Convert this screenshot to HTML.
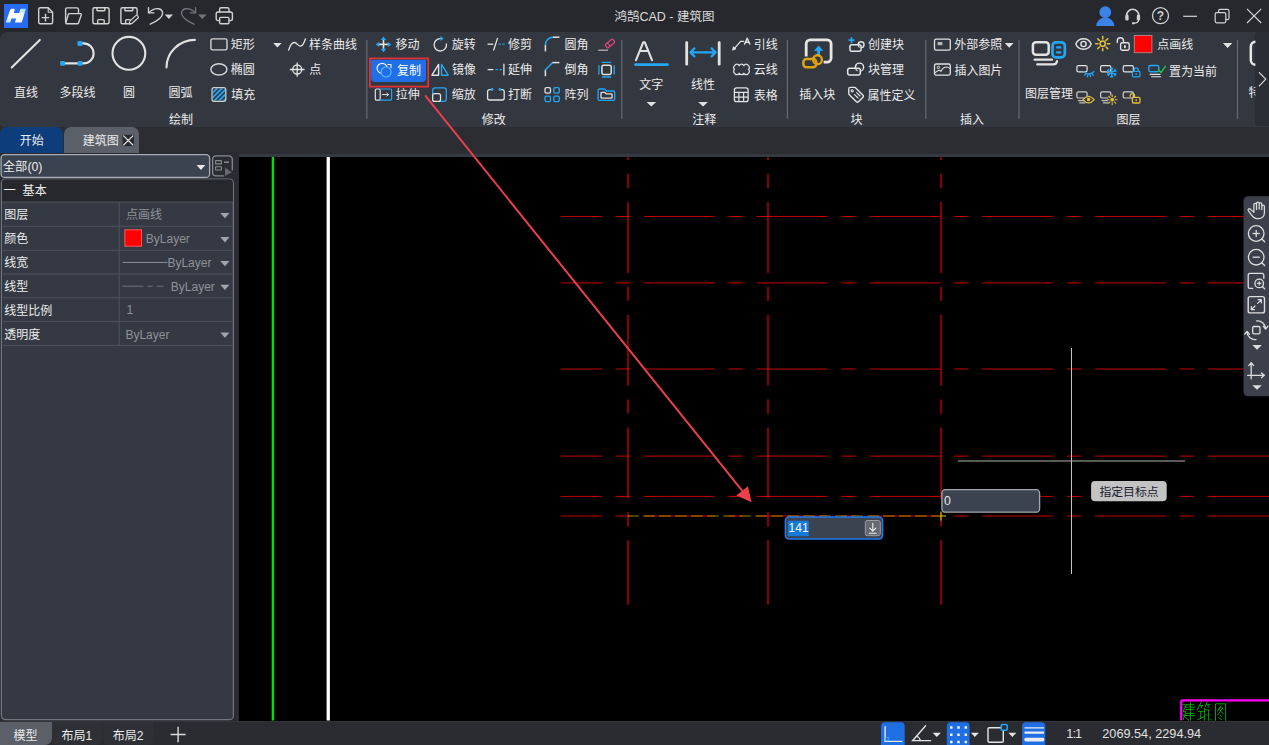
<!DOCTYPE html>
<html lang="zh-CN"><head><meta charset="utf-8"><title>鸿鹄CAD - 建筑图</title>
<style>
html,body{margin:0;padding:0;background:#000;}
body{width:1269px;height:745px;position:relative;overflow:hidden;font-family:"Liberation Sans","Noto Sans CJK SC",sans-serif;}
#bg div{position:absolute;box-sizing:border-box;}
#gfx{position:absolute;left:0;top:0;width:1269px;height:745px;overflow:hidden;}
#gfx text{font-family:"Liberation Sans","Noto Sans CJK SC",sans-serif;font-size:12px;fill:#ebebeb;}
#txt span{position:absolute;white-space:nowrap;}
</style></head><body>
<div id="bg">
<div style="left:0px;top:0px;width:1269px;height:745px;background:#26282d;"></div>
<div style="left:0px;top:32px;width:1269px;height:94.7px;background:#33373f;border-radius:7px 0 0 4px;"></div>
<div style="left:1255.4px;top:32.2px;width:13.6px;height:94.2px;background:#2b2d34;border-radius:4px 0 0 4px;"></div>
<div style="left:0px;top:126.5px;width:1269px;height:30.5px;background:#2b2d33;"></div>
<div style="left:0px;top:151px;width:239px;height:570px;background:#2a2c32;"></div>
<div style="left:238.6px;top:154.2px;width:1030.4px;height:3px;background:#353941;"></div>
<div style="left:239px;top:157px;width:1030px;height:563.5px;background:#000;"></div>
<div style="left:0px;top:720.5px;width:1269px;height:24.5px;background:#2a2c32;border-top:1px solid #323439;"></div>
<div style="left:0px;top:126.9px;width:63.1px;height:26.4px;background:#0d3d7b;border-radius:7px 7px 0 0;"></div>
<div style="left:63.7px;top:126.9px;width:75.2px;height:26.4px;background:#5b5f67;border-radius:7px 7px 0 0;"></div>
<div style="left:0px;top:721.5px;width:51.6px;height:23.5px;background:#5b5f67;border-radius:0 0 7px 0;"></div>
<div style="left:52.2px;top:721.5px;width:49.8px;height:23.5px;background:#2e3036;border-radius:0 0 6px 6px;"></div>
<div style="left:102.5px;top:721.5px;width:50.3px;height:23.5px;background:#2e3036;border-radius:0 0 6px 6px;"></div>
</div>
<svg id="gfx" width="1269" height="745" viewBox="0 0 1269 745">
<rect x="271.7" y="157" width="2.4" height="563.5" fill="#00e000"/>
<rect x="326.6" y="157" width="3.3" height="563.5" fill="#ffffff"/>
<line x1="561.1" y1="216.45" x2="1269" y2="216.45" stroke="#c60000" stroke-width="1" stroke-dasharray="71 13.7 14.4 13.7" stroke-dashoffset="30.1"/>
<line x1="561.1" y1="282.9" x2="1269" y2="282.9" stroke="#c60000" stroke-width="1" stroke-dasharray="71 13.7 14.4 13.7" stroke-dashoffset="30.1"/>
<line x1="561.1" y1="369.0" x2="1269" y2="369.0" stroke="#c60000" stroke-width="1" stroke-dasharray="71 13.7 14.4 13.7" stroke-dashoffset="30.1"/>
<line x1="561.1" y1="456.1" x2="1269" y2="456.1" stroke="#c60000" stroke-width="1" stroke-dasharray="71 13.7 14.4 13.7" stroke-dashoffset="30.1"/>
<line x1="561.1" y1="496.4" x2="1269" y2="496.4" stroke="#c60000" stroke-width="1" stroke-dasharray="71 13.7 14.4 13.7" stroke-dashoffset="30.1"/>
<line x1="561.1" y1="516.0" x2="1269" y2="516.0" stroke="#c60000" stroke-width="1" stroke-dasharray="71 13.7 14.4 13.7" stroke-dashoffset="30.1"/>
<line x1="628.0" y1="157" x2="628.0" y2="604.8" stroke="#ff0000" stroke-width="1.05" stroke-dasharray="71 13.7 14.4 13.7" stroke-dashoffset="67.9"/>
<line x1="768.0" y1="157" x2="768.0" y2="604.8" stroke="#ff0000" stroke-width="1.05" stroke-dasharray="71 13.7 14.4 13.7" stroke-dashoffset="67.9"/>
<line x1="941.0" y1="157" x2="941.0" y2="604.8" stroke="#ff0000" stroke-width="1.05" stroke-dasharray="71 13.7 14.4 13.7" stroke-dashoffset="67.9"/>
<path d="M1181.2,720.3V701.4a1,1 0 0 1 1,-1H1269" fill="none" stroke="#ff00ff" stroke-width="2.2"/>
<path d="M1190.4,701.9V720.3M1186.2,704.7H1193.6M1185,707.1H1194.9M1186.2,709.5H1193.2M1186,713.4H1194M1185,715.5H1194.6M1182.6,704.8H1186.3L1183.1,711.6H1185.9L1183,719.8M1182.6,714.6L1188.8,720.3M1201.1,702.1L1197.3,709.8M1200,705.5H1203.3M1201.6,705.5V707.8M1207.2,702.1L1205.2,706.5M1206.6,704.7H1209.8M1208.2,704.9V707.4M1198.6,711.4H1203M1200.7,711.4V718.6M1198,719.7L1204.4,716.6M1204.4,708.2V720.3M1204.4,709.7H1208.6V720.3M1206.2,714.4L1206.9,715.4M1210.8,719.2L1211.1,720M1215.5,720.3V703.8H1225.6V720.3M1221,706L1217.6,711.2M1219.6,707.8H1222.9L1217.5,715M1218.6,708.8L1223.4,714M1220,715.3L1221.5,716.4M1218.6,717.7L1221.5,719.7" fill="none" stroke="#00c000" stroke-width=".85" stroke-linecap="round" stroke-linejoin="round"/>
<path d="M1269,196.3H1248a4.5,4.5 0 0 0 -4.5,4.5V391.8a4.5,4.5 0 0 0 4.5,4.5H1269Z" fill="#3b404b"/>
<path d="M371.1,59.8H426V78.1a4,4 0 0 1 -4,4H375.1a4,4 0 0 1 -4,-4Z" fill="#1f6fe7"/>
<text x="614.49" y="21.05" style="font-size:12.5px;fill:#dcdcdc">鸿鹄CAD - 建筑图</text>
<rect x="366.2" y="39.8" width="1.2" height="79" fill="#666a72"/>
<rect x="621.1999999999999" y="39.8" width="1.2" height="79" fill="#666a72"/>
<rect x="786.8" y="39.8" width="1.2" height="79" fill="#666a72"/>
<rect x="925.1999999999999" y="39.8" width="1.2" height="79" fill="#666a72"/>
<rect x="1018.4" y="39.8" width="1.2" height="79" fill="#666a72"/>
<rect x="1236.9" y="39.8" width="1.2" height="79" fill="#666a72"/>
<text x="14.1" y="97.26">直线</text>
<text x="59.5" y="97.26">多段线</text>
<text x="122.9" y="97.26">圆</text>
<text x="168.6" y="97.26">圆弧</text>
<text x="230.8" y="49.16">矩形</text>
<text x="230.8" y="74.06">椭圆</text>
<text x="231.2" y="99.36">填充</text>
<text x="309" y="49.16">样条曲线</text>
<text x="309.2" y="74.06">点</text>
<text x="169" y="124.16">绘制</text>
<text x="395.6" y="49.16">移动</text>
<text x="396.9" y="74.56" style="fill:#ffffff">复制</text>
<text x="395.8" y="99.36">拉伸</text>
<text x="451.8" y="49.16">旋转</text>
<text x="451.9" y="74.36">镜像</text>
<text x="451.8" y="99.36">缩放</text>
<text x="507.9" y="49.16">修剪</text>
<text x="507.9" y="74.36">延伸</text>
<text x="507.9" y="99.36">打断</text>
<text x="564.4" y="49.16">圆角</text>
<text x="564.4" y="74.36">倒角</text>
<text x="564.4" y="99.36">阵列</text>
<text x="481.8" y="123.66">修改</text>
<text x="639.3" y="89.16">文字</text>
<text x="691" y="89.16">线性</text>
<text x="753.8" y="49.16">引线</text>
<text x="753.8" y="74.36">云线</text>
<text x="753.8" y="99.56">表格</text>
<text x="692.3" y="124.16">注释</text>
<text x="799.3" y="98.66">插入块</text>
<text x="868" y="49.46">创建块</text>
<text x="868" y="74.36">块管理</text>
<text x="867.6" y="99.76">属性定义</text>
<text x="850.5" y="124.16">块</text>
<text x="954.2" y="49.16">外部参照</text>
<text x="954.6" y="74.56">插入图片</text>
<text x="960.1" y="124.46">插入</text>
<text x="1025.1" y="97.66">图层管理</text>
<text x="1157.2" y="49.46">点画线</text>
<text x="1169.1" y="75.66">置为当前</text>
<text x="1116.4" y="124.16">图层</text>
<clipPath id="clipR"><rect x="1238" y="32" width="17.4" height="94"/></clipPath>
<g clip-path="url(#clipR)">
<text x="1248.6" y="97.26">特性</text>
<path d="M1262,41.8H1255.6a4.8,4.8 0 0 0 -4.8,4.8V60a4.8,4.8 0 0 0 4.8,4.8H1262" fill="none" stroke="#e8e8e8" stroke-width="2.5" stroke-linejoin="round" stroke-linecap="round" />
</g>
<path d="M1259.3,72.6L1265.8,79.2L1259.3,85.8" fill="none" stroke="#dcdcdc" stroke-width="1.2" stroke-linejoin="round" stroke-linecap="round" />
<text x="19.7" y="145.26">开始</text>
<text x="82.7" y="145.26">建筑图</text>
<rect x="122.5" y="134.8" width="11.5" height="11.3" rx="0" fill="#292b30"  />
<path d="M123.6,135.9L132.9,145M132.9,135.9L123.6,145" fill="none" stroke="#e8e8e8" stroke-width="1.1" stroke-linejoin="round" stroke-linecap="round" />
<rect x="1.1" y="154.7" width="208.5" height="22.7" rx="3.5" fill="#3b4250" stroke="#a9adb3" stroke-width="1.3" />
<text x="2.8" y="170.97" style="font-size:12.3px">全部(0)</text>
<path d="M196.6,165H205.3L200.95,169.9Z" fill="#e8e8e8"/>
<path d="M223.6,175.9H216a3.4,3.4 0 0 1 -3.4,-3.4V159.3a3.4,3.4 0 0 1 3.4,-3.4H228.9a3.4,3.4 0 0 1 3.4,3.4V169.9" fill="none" stroke="#868a90" stroke-width="1.3" stroke-linejoin="round" stroke-linecap="round" />
<rect x="215.6" y="160.6" width="5.8" height="3.3" rx="0.2" fill="none" stroke="#868a90" stroke-width="1.1" />
<rect x="215.6" y="166.7" width="5.8" height="3.3" rx="0.2" fill="none" stroke="#868a90" stroke-width="1.1" />
<line x1="224" y1="162.2" x2="229" y2="162.2" stroke="#868a90" stroke-width="1.5" stroke-linecap="butt" />
<path d="M225,167.5L231.7,172.2L225,175.9Z" fill="#66696f"/>
<rect x="1.4" y="179" width="232" height="540.7" rx="4" fill="#343944" stroke="#70747c" stroke-width="1.2" />
<path d="M2,201.8V183a3.4,3.4 0 0 1 3.4,-3.4H229.4a3.4,3.4 0 0 1 3.4,3.4V201.8Z" fill="#26282d"/>
<rect x="2" y="201.6" width="230.8" height="1" fill="#4f545e"/>
<rect x="2" y="225.7" width="230.8" height="1" fill="#4f545e"/>
<rect x="2" y="249.7" width="230.8" height="1" fill="#4f545e"/>
<rect x="2" y="273.5" width="230.8" height="1" fill="#4f545e"/>
<rect x="2" y="297.3" width="230.8" height="1" fill="#4f545e"/>
<rect x="2" y="321.1" width="230.8" height="1" fill="#4f545e"/>
<rect x="2" y="344.9" width="230.8" height="1" fill="#4f545e"/>
<rect x="118.7" y="202.1" width="1" height="143.3" fill="#4f545e"/>
<text x="3.6" y="195.27" style="font-size:12.3px">一</text>
<text x="22.3" y="195.27" style="font-size:12.3px">基本</text>
<text x="4.3" y="219.41">图层</text>
<path d="M220.3,213.05H229.5L224.9,218.35Z" fill="#a2a6ab"/>
<text x="4.3" y="243.46">颜色</text>
<path d="M220.3,237.1H229.5L224.9,242.4Z" fill="#a2a6ab"/>
<text x="4.3" y="267.36">线宽</text>
<path d="M220.3,261H229.5L224.9,266.3Z" fill="#a2a6ab"/>
<text x="4.3" y="291.16">线型</text>
<path d="M220.3,284.8H229.5L224.9,290.1Z" fill="#a2a6ab"/>
<text x="4.3" y="314.96">线型比例</text>
<text x="4.3" y="338.76">透明度</text>
<path d="M220.3,332.4H229.5L224.9,337.7Z" fill="#a2a6ab"/>
<text x="126.1" y="219.46" style="fill:#8e9298">点画线</text>
<rect x="124.9" y="229.8" width="16.6" height="16.4" rx="0" fill="#ff0000" stroke="#ff5a5a" stroke-width="1" />
<line x1="122.5" y1="262.4" x2="167.5" y2="262.4" stroke="#8e9298" stroke-width="1" stroke-linecap="butt" />
<line x1="122.5" y1="286.2" x2="143.4" y2="286.2" stroke="#6e727a" stroke-width="1" stroke-linecap="butt" />
<line x1="147.4" y1="286.2" x2="152.7" y2="286.2" stroke="#6e727a" stroke-width="1" stroke-linecap="butt" />
<line x1="156.6" y1="286.2" x2="163.5" y2="286.2" stroke="#6e727a" stroke-width="1" stroke-linecap="butt" />
<text x="13.6" y="739.86">模型</text>
<text x="61.5" y="739.86">布局1</text>
<text x="112.7" y="739.86">布局2</text>
<path d="M170.6,734.5H185.6M178.1,726.8V742.3" fill="none" stroke="#dcdcdc" stroke-width="1.4" stroke-linejoin="round" stroke-linecap="butt" />
<defs><linearGradient id="lg" x1="1" y1="0" x2="0" y2="1"><stop offset="0.08" stop-color="#a6e2ff"/><stop offset="0.36" stop-color="#ffffff"/><stop offset="0.68" stop-color="#ffffff"/><stop offset="0.95" stop-color="#b4e6ff"/></linearGradient></defs>
<rect x="4" y="4" width="24" height="24" rx="0" fill="#2a6bf4"  />
<path d="M11.6,8.8H14.2C14.7,8.8 14.9,9.2 14.8,9.7L13.9,12.9H19.2L20.2,9.6C20.4,9 20.9,8.8 21.4,8.8H25.2C25.7,8.8 25.9,9.2 25.7,9.7L21.9,21.8C21.7,22.4 21.3,22.6 20.8,22.6H15.6C15.1,22.6 14.9,22.2 15.1,21.7L16.1,18.5H11.5L10.4,21.8C10.2,22.4 9.8,22.6 9.3,22.6H6.5C6,22.6 5.8,22.2 6,21.7L10.2,9.8C10.5,9.1 11,8.8 11.6,8.8Z" fill="url(#lg)"/>
<path d="M40.2,7.8H48.2L52.6,12.2V22.3a1.5,1.5 0 0 1 -1.5,1.5H40.2a1.5,1.5 0 0 1 -1.5,-1.5V9.3a1.5,1.5 0 0 1 1.5,-1.5Z" fill="none" stroke="#d2d2d2" stroke-width="1.4" stroke-linejoin="round" stroke-linecap="round" />
<path d="M48.2,8V12.2H52.4" fill="none" stroke="#d2d2d2" stroke-width="1.1" stroke-linejoin="round" stroke-linecap="round" />
<path d="M41.7,17.6H49.3M45.5,13.8V21.4" fill="none" stroke="#d2d2d2" stroke-width="1.4" stroke-linejoin="round" stroke-linecap="butt" />
<path d="M65.6,22V9.4a1.5,1.5 0 0 1 1.5,-1.5H77a1.5,1.5 0 0 1 1.5,1.5V13.4" fill="none" stroke="#d2d2d2" stroke-width="1.4" stroke-linejoin="round" stroke-linecap="round" />
<path d="M69.4,13.6H80.6a.8,.8 0 0 1 .75,1.05L78.5,23a1.2,1.2 0 0 1 -1.1,.8H66.6a.8,.8 0 0 1 -.75,-1.05L68.3,14.4a1.2,1.2 0 0 1 1.1,-.8Z" fill="none" stroke="#d2d2d2" stroke-width="1.4" stroke-linejoin="round" stroke-linecap="round" />
<path d="M94.4,7.8H107.60000000000001a1.5,1.5 0 0 1 1.5,1.5V22.3a1.5,1.5 0 0 1 -1.5,1.5H94.4a1.5,1.5 0 0 1 -1.5,-1.5V9.3a1.5,1.5 0 0 1 1.5,-1.5Z" fill="none" stroke="#d2d2d2" stroke-width="1.4" stroke-linejoin="round" stroke-linecap="round" />
<path d="M96.9,8V10a.8,.8 0 0 0 .8,.8H104.0a.8,.8 0 0 0 .8,-.8V8" fill="none" stroke="#d2d2d2" stroke-width="1.4" stroke-linejoin="round" stroke-linecap="round" />
<path d="M97.7,23.6V20.6a1,1 0 0 1 1,-1H103.2a1,1 0 0 1 1,1V23.6" fill="none" stroke="#d2d2d2" stroke-width="1.4" stroke-linejoin="round" stroke-linecap="round" />
<path d="M131,23.8H122.4a1.5,1.5 0 0 1 -1.5,-1.5V9.3a1.5,1.5 0 0 1 1.5,-1.5H135.6a1.5,1.5 0 0 1 1.5,1.5V14.5" fill="none" stroke="#d2d2d2" stroke-width="1.4" stroke-linejoin="round" stroke-linecap="round" />
<path d="M124.9,8V10a.8,.8 0 0 0 .8,.8H132a.8,.8 0 0 0 .8,-.8V8" fill="none" stroke="#d2d2d2" stroke-width="1.4" stroke-linejoin="round" stroke-linecap="round" />
<path d="M125.6,23.6V20.6a1,1 0 0 1 1,-1H130" fill="none" stroke="#d2d2d2" stroke-width="1.4" stroke-linejoin="round" stroke-linecap="round" />
<path d="M129.2,23.9L129.9,21.1L135.7,15.6a1.1,1.1 0 0 1 1.6,0L138,16.4a1.1,1.1 0 0 1 0,1.6L132.2,23.3Z" fill="none" stroke="#d2d2d2" stroke-width="1.2" stroke-linejoin="round" stroke-linecap="round" />
<path d="M150.2,24.2C156.5,21.3 162.6,18 162.6,13.2C162.6,8.6 156,6.2 149,12.4" fill="none" stroke="#d2d2d2" stroke-width="1.4" stroke-linejoin="round" stroke-linecap="round" />
<path d="M148.5,7.6V12.9H153.8" fill="none" stroke="#d2d2d2" stroke-width="1.4" stroke-linejoin="round" stroke-linecap="round" />
<path d="M164.7,14.4H173L168.85,19Z" fill="#d2d2d2"/>
<path d="M194,24.2C187.7,21.3 181.6,18 181.6,13.2C181.6,8.6 188.2,6.2 195.2,12.4" fill="none" stroke="#74767c" stroke-width="1.3" stroke-linejoin="round" stroke-linecap="round" />
<path d="M195.6,7.6V12.9H190.3" fill="none" stroke="#74767c" stroke-width="1.3" stroke-linejoin="round" stroke-linecap="round" />
<path d="M198,14.4H206.6L202.3,19Z" fill="#74767c"/>
<path d="M219.6,12V9.2a1.4,1.4 0 0 1 1.4,-1.4H227.6a1.4,1.4 0 0 1 1.4,1.4V12" fill="none" stroke="#d2d2d2" stroke-width="1.4" stroke-linejoin="round" stroke-linecap="round" />
<path d="M219.6,20.6H218a1.8,1.8 0 0 1 -1.8,-1.8V13.8a1.8,1.8 0 0 1 1.8,-1.8H230.6a1.8,1.8 0 0 1 1.8,1.8V18.8a1.8,1.8 0 0 1 -1.8,1.8H229" fill="none" stroke="#d2d2d2" stroke-width="1.4" stroke-linejoin="round" stroke-linecap="round" />
<rect x="219.6" y="17.4" width="9.4" height="6.4" rx="1.2" fill="none" stroke="#d2d2d2" stroke-width="1.4" />
<circle cx="1105.3" cy="12.2" r="5.9" fill="#3c83e8"  />
<path d="M1096.3,25.9a9,8.3 0 0 1 18,0Z" fill="#3c83e8"/>
<path d="M1126.6,17.6V15.4a6.1,6.1 0 0 1 12.2,0V17.6" fill="none" stroke="#d2d2d2" stroke-width="1.5" stroke-linejoin="round" stroke-linecap="round" />
<rect x="1125.3" y="14.6" width="3.3" height="6" rx="1.4" fill="#d2d2d2"  />
<rect x="1136.8" y="14.6" width="3.3" height="6" rx="1.4" fill="#d2d2d2"  />
<path d="M1138.6,19.8C1138.6,22.4 1136.5,23.2 1133.8,23.3" fill="none" stroke="#d2d2d2" stroke-width="1.3" stroke-linejoin="round" stroke-linecap="round" />
<circle cx="1133.2" cy="23.2" r="1.2" fill="#d2d2d2"  />
<circle cx="1160.5" cy="15.7" r="8" fill="none" stroke="#d2d2d2" stroke-width="1.3" />
<line x1="1183.2" y1="16.3" x2="1197" y2="16.3" stroke="#d2d2d2" stroke-width="1.2" stroke-linecap="butt" />
<rect x="1215.2" y="12.6" width="10.6" height="10.2" rx="1.5" fill="none" stroke="#d2d2d2" stroke-width="1.2" />
<path d="M1218.6,12.4V10.9a1.6,1.6 0 0 1 1.6,-1.6H1227.4a1.6,1.6 0 0 1 1.6,1.6V18a1.6,1.6 0 0 1 -1.6,1.6H1226" fill="none" stroke="#d2d2d2" stroke-width="1.2" stroke-linejoin="round" stroke-linecap="round" />
<path d="M1247,8.8L1261.2,23M1261.2,8.8L1247,23" fill="none" stroke="#d2d2d2" stroke-width="1.2" stroke-linejoin="round" stroke-linecap="butt" />
<line x1="11.7" y1="67.4" x2="39.8" y2="39.9" stroke="#e2e2e2" stroke-width="2.1" stroke-linecap="round" />
<path d="M62.5,63.4H83.6A10,10 0 0 0 83.6,43.4H80" fill="none" stroke="#e2e2e2" stroke-width="2.1" stroke-linejoin="round" stroke-linecap="round" />
<rect x="60.1" y="61" width="5" height="4.8" rx="1.2" fill="#25a6f5"  />
<rect x="77.5" y="61" width="5" height="4.8" rx="1.2" fill="#25a6f5"  />
<rect x="77.5" y="41.1" width="5" height="4.8" rx="1.2" fill="#25a6f5"  />
<circle cx="128.9" cy="53.3" r="16.4" fill="none" stroke="#e2e2e2" stroke-width="2.1" />
<path d="M166.5,67.4A28.6,27.6 0 0 1 194.9,39.9" fill="none" stroke="#e2e2e2" stroke-width="2.1" stroke-linejoin="round" stroke-linecap="round" />
<rect x="210.9" y="38.9" width="16.1" height="11" rx="1.7" fill="none" stroke="#d6d6d6" stroke-width="1.4" />
<ellipse cx="218.9" cy="69.4" rx="8" ry="5.6" fill="none" stroke="#d6d6d6" stroke-width="1.4"/>
<clipPath id="hc"><rect x="212.6" y="88.3" width="12.6" height="12.4" rx="1.2"/></clipPath>
<g clip-path="url(#hc)" stroke="#25a6f5" stroke-width="1.8"><line x1="196.6" y1="104" x2="212.6" y2="88"/><line x1="201.4" y1="104" x2="217.4" y2="88"/><line x1="206.2" y1="104" x2="222.2" y2="88"/><line x1="211" y1="104" x2="227" y2="88"/><line x1="215.8" y1="104" x2="231.8" y2="88"/><line x1="220.6" y1="104" x2="236.6" y2="88"/></g>
<rect x="212" y="87.7" width="13.8" height="13.6" rx="2" fill="none" stroke="#d0d0d0" stroke-width="1.2" />
<path d="M273.2,43H281.6L277.4,47.6Z" fill="#e2e2e2"/>
<path d="M288.6,50.1C290.2,45.2 292,42.4 294.4,42.5C297.3,42.7 297.8,46.3 300.6,46.1C302.9,45.9 304.4,42.2 305.5,38.8" fill="none" stroke="#e2e2e2" stroke-width="1.3" stroke-linejoin="round" stroke-linecap="round" />
<circle cx="297.2" cy="69.5" r="4.5" fill="none" stroke="#e2e2e2" stroke-width="1.3" />
<path d="M289.8,69.5H304.6M297.2,62.4V76.7" fill="none" stroke="#e2e2e2" stroke-width="1.3" stroke-linejoin="round" stroke-linecap="butt" />
<path d="M379.1,44.4H387.9M383.5,40.0V48.8" fill="none" stroke="#e2e2e2" stroke-width="1.6" stroke-linejoin="round" stroke-linecap="butt" />
<path d="M383.5,36.6l2.7,3.5h-5.4ZM383.5,52.199999999999996l2.7,-3.5h-5.4ZM375.7,44.4l3.5,-2.7v5.4ZM391.3,44.4l-3.5,-2.7v5.4Z" fill="#25a6f5"/>
<circle cx="382.1" cy="68.3" r="5" fill="none" stroke="#f0f0f0" stroke-width="1.2" />
<circle cx="386.1" cy="72" r="5" fill="#1f6fe7" stroke="#58b6ff" stroke-width="1.2" />
<path d="M387.9,64.5H391V67.6" fill="none" stroke="#f0f0f0" stroke-width="1.1" stroke-linejoin="round" stroke-linecap="round" />
<rect x="375.3" y="89" width="4.9" height="11.2" rx="1.3" fill="none" stroke="#e2e2e2" stroke-width="1.2" />
<path d="M380.2,89H390.2a1.4,1.4 0 0 1 1.4,1.4V98.8a1.4,1.4 0 0 1 -1.4,1.4H380.2" fill="none" stroke="#25a6f5" stroke-width="1.2" stroke-linejoin="round" stroke-linecap="round" />
<path d="M382.4,94.6H388.4M386.9,93.2L388.5,94.6L386.9,96" fill="none" stroke="#e2e2e2" stroke-width="1" stroke-linejoin="round" stroke-linecap="round" />
<path d="M440.3,38.6A6.2,6.2 0 1 0 446.44,43.94" fill="none" stroke="#e2e2e2" stroke-width="1.3" stroke-linejoin="round" stroke-linecap="round" />
<path d="M440.5,36.099999999999994L443.7,38.599999999999994L440.5,41.099999999999994Z" fill="#25a6f5"/>
<path d="M431.9,75.2H438.6V64.4Z" fill="none" stroke="#e2e2e2" stroke-width="1.4" stroke-linejoin="round" stroke-linecap="round" />
<path d="M441.5,64.4V75.2H448.2Z" fill="none" stroke="#25a6f5" stroke-width="1.4" stroke-linejoin="round" stroke-linecap="round" />
<rect x="432.7" y="87.8" width="13.6" height="13.6" rx="2.4" fill="none" stroke="#25a6f5" stroke-width="1.3" />
<rect x="432.7" y="93.6" width="7.8" height="7.8" rx="2" fill="#33373f" stroke="#e2e2e2" stroke-width="1.3" />
<line x1="487.5" y1="44.2" x2="493.3" y2="44.2" stroke="#e2e2e2" stroke-width="1.3" stroke-linecap="butt" />
<line x1="493.7" y1="50" x2="497.5" y2="38.4" stroke="#e2e2e2" stroke-width="1.3" stroke-linecap="round" />
<line x1="498.6" y1="44.2" x2="504.8" y2="44.2" stroke="#25a6f5" stroke-width="1.3" stroke-linecap="butt" stroke-dasharray="2.2 1.6"/>
<line x1="487.6" y1="69.6" x2="493.4" y2="69.6" stroke="#e2e2e2" stroke-width="1.3" stroke-linecap="butt" />
<line x1="495.5" y1="69.6" x2="502.2" y2="69.6" stroke="#25a6f5" stroke-width="1.3" stroke-linecap="butt" stroke-dasharray="2.4 1.6"/>
<line x1="503.9" y1="63.7" x2="503.9" y2="75.4" stroke="#e2e2e2" stroke-width="1.3" stroke-linecap="butt" />
<path d="M491.8,89.6H489.6a2,2 0 0 0 -2,2V98a2,2 0 0 0 2,2H502.2a2,2 0 0 0 2,-2V91.6a2,2 0 0 0 -2,-2H500.2" fill="none" stroke="#e2e2e2" stroke-width="1.3" stroke-linejoin="round" stroke-linecap="round" />
<circle cx="492.1" cy="89.4" r="1.4" fill="#25a6f5"  />
<circle cx="499.9" cy="89.4" r="1.4" fill="#25a6f5"  />
<line x1="545.4" y1="51.4" x2="545.4" y2="44.8" stroke="#e2e2e2" stroke-width="1.5" stroke-linecap="butt" />
<path d="M545.4,44.8A7.6,7.6 0 0 1 553,37.2" fill="none" stroke="#25a6f5" stroke-width="1.5" stroke-linejoin="round" stroke-linecap="butt" />
<line x1="553" y1="37.2" x2="559.4" y2="37.2" stroke="#e2e2e2" stroke-width="1.5" stroke-linecap="butt" />
<line x1="545.4" y1="76.2" x2="545.4" y2="69.8" stroke="#e2e2e2" stroke-width="1.5" stroke-linecap="butt" />
<line x1="545.4" y1="69.8" x2="552.6" y2="62.6" stroke="#25a6f5" stroke-width="1.5" stroke-linecap="round" />
<line x1="552.6" y1="62.6" x2="559.4" y2="62.6" stroke="#e2e2e2" stroke-width="1.5" stroke-linecap="butt" />
<rect x="545" y="87.6" width="5.5" height="5.5" rx="1.4" fill="none" stroke="#e2e2e2" stroke-width="1.3" />
<rect x="553.8" y="87.6" width="5.5" height="5.5" rx="1.4" fill="none" stroke="#25a6f5" stroke-width="1.3" />
<rect x="545" y="96.2" width="5.5" height="5.5" rx="1.4" fill="none" stroke="#25a6f5" stroke-width="1.3" />
<rect x="553.8" y="96.2" width="5.5" height="5.5" rx="1.4" fill="none" stroke="#25a6f5" stroke-width="1.3" />
<line x1="598.2" y1="50.2" x2="608" y2="50.2" stroke="#b4b4b4" stroke-width="1.3" stroke-linecap="butt" />
<rect x="-4.9" y="-2.2" width="9.8" height="4.4" rx="1.2" transform="translate(610,43.5) rotate(-40)" fill="none" stroke="#e0457e" stroke-width="1.3"/>
<line x1="-1.6" y1="-2.2" x2="-1.6" y2="2.2" transform="translate(610,43.5) rotate(-40)" stroke="#e0457e" stroke-width="1"/>
<rect x="601.9" y="65.2" width="9.3" height="9.2" rx="1.6" fill="none" stroke="#e2e2e2" stroke-width="1.5" />
<path d="M601.9,62.3H611.2M601.9,77H611.2M598.9,65.2V74.4M614.2,65.2V74.4" fill="none" stroke="#25a6f5" stroke-width="1.3" stroke-linejoin="round" stroke-linecap="butt" />
<path d="M598.1,98.9V90.5a1.5,1.5 0 0 1 1.5,-1.5H604.6l1.8,2H613.2a1.5,1.5 0 0 1 1.5,1.5V98.9a1.5,1.5 0 0 1 -1.5,1.5H599.6a1.5,1.5 0 0 1 -1.5,-1.5Z" fill="none" stroke="#25a6f5" stroke-width="1.3" stroke-linejoin="round" stroke-linecap="round" />
<path d="M601,97.4V93.2a.8,.8 0 0 1 .8,-.8H604.8l1.3,1.4H611.2a.8,.8 0 0 1 .8,.8V97.4a.7,.7 0 0 1 -.7,.7H601.7a.7,.7 0 0 1 -.7,-.7Z" fill="none" stroke="#e2e2e2" stroke-width="1.3" stroke-linejoin="round" stroke-linecap="round" />
<path d="M636,60.2L643.2,42.3H644.8L652,60.2M639.6,51H648.4" fill="none" stroke="#e2e2e2" stroke-width="2.1" stroke-linejoin="round" stroke-linecap="round" />
<line x1="635.4" y1="64.6" x2="667.5" y2="64.6" stroke="#25a6f5" stroke-width="2.7" stroke-linecap="round" />
<path d="M646.6,102H656.1L651.35,106.6Z" fill="#e2e2e2"/>
<line x1="686.7" y1="42.6" x2="686.7" y2="64.2" stroke="#e2e2e2" stroke-width="2.8" stroke-linecap="round" />
<line x1="719.2" y1="42.6" x2="719.2" y2="64.2" stroke="#e2e2e2" stroke-width="2.8" stroke-linecap="round" />
<path d="M691,52.4H715M694.4,48.4L690.4,52.4L694.4,56.4M711.6,48.4L715.6,52.4L711.6,56.4" fill="none" stroke="#25a6f5" stroke-width="2.2" stroke-linejoin="round" stroke-linecap="round" />
<path d="M698.2,102H707.9L703.05,106.6Z" fill="#e2e2e2"/>
<path d="M733.6,49.4L740.6,41.4H743.6" fill="none" stroke="#e2e2e2" stroke-width="1.3" stroke-linejoin="round" stroke-linecap="round" />
<path d="M732.5,50.3L733.3,46.6L736,48.9Z" fill="#e2e2e2" stroke="#e2e2e2" stroke-width=".6" stroke-linejoin="round"/>
<path d="M744.6,44.1L747.2,38.2L749.8,44.1M745.5,42.2H748.9" fill="none" stroke="#e2e2e2" stroke-width="1.4" stroke-linejoin="round" stroke-linecap="round" />
<path d="M734.6,65.7a2.5,2.5 0 0 1 4.6,0a2.5,2.5 0 0 1 4.6,0a2.5,2.5 0 0 1 4.6,0a2.2,2.2 0 0 1 0,3.75a2.2,2.2 0 0 1 0,3.75a2.5,2.5 0 0 1 -4.6,0a2.5,2.5 0 0 1 -4.6,0a2.5,2.5 0 0 1 -4.6,0a2.2,2.2 0 0 1 0,-3.75a2.2,2.2 0 0 1 0,-3.75Z" fill="none" stroke="#e2e2e2" stroke-width="1.2" stroke-linejoin="round" stroke-linecap="round" />
<rect x="734.4" y="87.8" width="13.7" height="13.9" rx="2.2" fill="none" stroke="#e2e2e2" stroke-width="1.3" />
<path d="M734.4,92.4H748.1M734.4,97.2H748.1M738.9,92.4V101.7M743.6,92.4V101.7" fill="none" stroke="#e2e2e2" stroke-width="1.2" stroke-linejoin="round" stroke-linecap="butt" />
<path d="M823.6,62.1H827.1a4,4 0 0 0 4,-4V43.9a4,4 0 0 0 -4,-4H810.2a4,4 0 0 0 -4,4V56.6" fill="none" stroke="#e6e6e6" stroke-width="2.8" stroke-linejoin="round" stroke-linecap="butt" />
<line x1="818.6" y1="55.8" x2="818.6" y2="50" stroke="#25a6f5" stroke-width="2.8" stroke-linecap="butt" />
<path d="M818.6,45.9L822.6,50.4H814.6Z" fill="#25a6f5" stroke="#25a6f5" stroke-width=".8" stroke-linejoin="round"/>
<circle cx="817.5" cy="59.7" r="4.4" fill="none" stroke="#dfa216" stroke-width="2.4" />
<rect x="803.4" y="59" width="12.8" height="8.3" rx="3" fill="#33373f" stroke="#dfa216" stroke-width="2.5" />
<path d="M813.6,57.6a4.4,4.4 0 0 0 1.7,5.9" fill="none" stroke="#dfa216" stroke-width="2.2"/>
<path d="M851.5,37.2V43M848.6,40.1H854.4" fill="none" stroke="#25a6f5" stroke-width="1.7" stroke-linejoin="round" stroke-linecap="butt" />
<circle cx="861.1" cy="44.7" r="2.9" fill="none" stroke="#e6e6e6" stroke-width="1.4" />
<rect x="849.9" y="44.8" width="11.2" height="6.5" rx="2" fill="#33373f" stroke="#e6e6e6" stroke-width="1.5" />
<path d="M858.9,42.8a2.9,2.9 0 0 0 .8,4.6" fill="none" stroke="#e6e6e6" stroke-width="1.2" opacity=".9"/>
<circle cx="859.5" cy="67.2" r="4.1" fill="none" stroke="#e6e6e6" stroke-width="1.4" />
<rect x="847.7" y="68.3" width="12.6" height="6.6" rx="2" fill="#33373f" stroke="#e6e6e6" stroke-width="1.5" />
<path d="M856.3,64.7a4.1,4.1 0 0 0 1.4,6.2" fill="none" stroke="#e6e6e6" stroke-width="1.2" opacity=".9"/>
<path d="M850.4,87.4H854.6a1.6,1.6 0 0 1 1.1,.5L863,95.2a1.4,1.4 0 0 1 0,2L858.4,101.8a1.4,1.4 0 0 1 -2,0L849.3,94.7a1.6,1.6 0 0 1 -.5,-1.1V89a1.6,1.6 0 0 1 1.6,-1.6Z" fill="none" stroke="#e6e6e6" stroke-width="1.4" stroke-linejoin="round" stroke-linecap="round" />
<circle cx="852.2" cy="90.8" r="1.1" fill="none" stroke="#e6e6e6" stroke-width="1.1" />
<path d="M854.6,94.6L858,98M856.6,92.6L860,96" fill="none" stroke="#e6e6e6" stroke-width="1.1" stroke-linejoin="round" stroke-linecap="round" />
<rect x="934.5" y="39.2" width="15.8" height="10.9" rx="1.6" fill="none" stroke="#e2e2e2" stroke-width="1.3" />
<rect x="937.6" y="42" width="4.8" height="3.2" rx="0" fill="#b8b8b8"  />
<rect x="934.5" y="64" width="15.8" height="11.1" rx="1.6" fill="none" stroke="#e2e2e2" stroke-width="1.3" />
<circle cx="938.4" cy="67.4" r="1.2" fill="none" stroke="#e2e2e2" stroke-width="1" />
<path d="M935,72.6C936.8,71.8 938,70 939.4,70.2C940.4,70.4 940.4,71.6 941.2,71.2C942.4,67.6 946.6,65.4 950,68.4" fill="none" stroke="#e2e2e2" stroke-width="1.1" stroke-linejoin="round" stroke-linecap="round" />
<path d="M1004.8,43H1013.6L1009.2,47.7Z" fill="#e2e2e2"/>
<rect x="1032.9" y="42.3" width="15.8" height="12.4" rx="3" fill="none" stroke="#e2e2e2" stroke-width="2.5" />
<rect x="1052.5" y="42.3" width="12.3" height="15" rx="3.4" fill="none" stroke="#25a6f5" stroke-width="2.7" />
<path d="M1056.2,47.3H1061.2M1056.2,52.3H1061.2" fill="none" stroke="#25a6f5" stroke-width="2.3" stroke-linejoin="round" stroke-linecap="butt" />
<line x1="1034.6" y1="59.7" x2="1052" y2="59.7" stroke="#e2e2e2" stroke-width="2.3" stroke-linecap="round" />
<path d="M1037.2,64.3H1053.4a3.6,3.6 0 0 0 3.6,-3.2" fill="none" stroke="#e2e2e2" stroke-width="2.3" stroke-linejoin="round" stroke-linecap="round" />
<path d="M1075.8,44A8.3,8.3 0 0 1 1091.2,44A8.3,8.3 0 0 1 1075.8,44Z" fill="none" stroke="#e2e2e2" stroke-width="1.4" stroke-linejoin="round" stroke-linecap="round" />
<circle cx="1083.5" cy="44" r="2.6" fill="none" stroke="#e2e2e2" stroke-width="1.4" />
<circle cx="1102.7" cy="43.7" r="2.6" fill="none" stroke="#e6bf3c" stroke-width="1.5" />
<path d="M1107.4,43.7L1109.8,43.7M1106.02,47.02L1107.72,48.72M1102.7,48.4L1102.7,50.8M1099.38,47.02L1097.68,48.72M1098,43.7L1095.6,43.7M1099.38,40.38L1097.68,38.68M1102.7,39L1102.7,36.6M1106.02,40.38L1107.72,38.68" fill="none" stroke="#e6bf3c" stroke-width="1.5" stroke-linejoin="round" stroke-linecap="round" />
<rect x="1120.6" y="42.8" width="8.6" height="7.4" rx="1.6" fill="none" stroke="#e2e2e2" stroke-width="1.4" />
<path d="M1117.3,42.6V40.9a3.1,3.1 0 0 1 6.2,0V42.6" fill="none" stroke="#e2e2e2" stroke-width="1.4" stroke-linejoin="round" stroke-linecap="round" />
<rect x="1124" y="45.2" width="1.8" height="2.9" rx="0" fill="#e2e2e2"  />
<rect x="1134.3" y="35.5" width="17.6" height="17.2" fill="#ff0000" stroke="#b98686" stroke-width=".9"/>
<path d="M1222.9,43H1232.3L1227.6,48Z" fill="#e2e2e2"/>
<rect x="1076.9" y="65.6" width="10.2" height="6.2" rx="1.6" fill="none" stroke="#e2e2e2" stroke-width="1.2" />
<path d="M1083.8,71.6Q1088.8,76.4 1094,71.6M1084.6,75.2L1085.8,73.6M1087.4,76.8L1087.9,74.9M1090.6,76.8L1090,74.9M1093.4,75.2L1092.1,73.6" fill="none" stroke="#25a6f5" stroke-width="1.3" stroke-linejoin="round" stroke-linecap="round" />
<rect x="1100.6" y="65.6" width="10.2" height="6.2" rx="1.6" fill="none" stroke="#e2e2e2" stroke-width="1.2" />
<path d="M1111.7,67.9L1111.7,77.1M1115.68,70.2L1107.72,74.8M1115.68,74.8L1107.72,70.2" fill="none" stroke="#25a6f5" stroke-width="1.35" stroke-linejoin="round" stroke-linecap="round" />
<path d="M1111.7,75.6L1110.54,76.84M1111.7,75.6L1112.86,76.84M1109.02,74.05L1107.36,73.67M1109.02,74.05L1108.52,75.68M1109.02,70.95L1108.52,69.32M1109.02,70.95L1107.36,71.33M1111.7,69.4L1112.86,68.16M1111.7,69.4L1110.54,68.16M1114.38,70.95L1116.04,71.33M1114.38,70.95L1114.88,69.32M1114.38,74.05L1114.88,75.68M1114.38,74.05L1116.04,73.67" fill="none" stroke="#25a6f5" stroke-width="1.15" stroke-linejoin="round" stroke-linecap="round" />
<rect x="1123.2" y="65.6" width="10.2" height="6.2" rx="1.6" fill="none" stroke="#e2e2e2" stroke-width="1.2" />
<rect x="1132.4" y="71.4" width="7.6" height="5.5" rx="1.3" fill="#33373f" stroke="#25a6f5" stroke-width="1.2" />
<path d="M1134.1,71.2V70a2.1,2.1 0 0 1 4.2,0V71.2" fill="none" stroke="#25a6f5" stroke-width="1.1" stroke-linejoin="round" stroke-linecap="round" />
<rect x="1135.6" y="73.2" width="1.2" height="1.9" rx="0" fill="#25a6f5"  />
<rect x="1148.8" y="65.5" width="10" height="6.2" rx="1.6" fill="none" stroke="#25a6f5" stroke-width="1.4" />
<line x1="1150.2" y1="74.4" x2="1160" y2="74.4" stroke="#e2e2e2" stroke-width="1.1" stroke-linecap="round" />
<line x1="1151.6" y1="76.7" x2="1160.6" y2="76.7" stroke="#e2e2e2" stroke-width="1.1" stroke-linecap="round" />
<path d="M1158.4,69.8L1161,72.6L1165.4,66.4" fill="none" stroke="#27c13f" stroke-width="1.5" stroke-linejoin="round" stroke-linecap="round" />
<rect x="1076.9" y="91.8" width="10.2" height="6.2" rx="1.6" fill="none" stroke="#d0d0d0" stroke-width="1.2" />
<line x1="1078.3" y1="100.6" x2="1085.9" y2="100.6" stroke="#c0c0c0" stroke-width="1.1" stroke-linecap="round" />
<line x1="1079.7" y1="102.9" x2="1084.9" y2="102.9" stroke="#c0c0c0" stroke-width="1.1" stroke-linecap="round" />
<rect x="1100.6" y="91.8" width="10.2" height="6.2" rx="1.6" fill="none" stroke="#d0d0d0" stroke-width="1.2" />
<line x1="1102" y1="100.6" x2="1109.6" y2="100.6" stroke="#c0c0c0" stroke-width="1.1" stroke-linecap="round" />
<line x1="1103.4" y1="102.9" x2="1108.6" y2="102.9" stroke="#c0c0c0" stroke-width="1.1" stroke-linecap="round" />
<rect x="1123.2" y="91.8" width="10.2" height="6.2" rx="1.6" fill="none" stroke="#d0d0d0" stroke-width="1.2" />
<path d="M1083,99.6Q1088.6,93 1094.2,99.6Q1088.6,106.2 1083,99.6Z" fill="#33373f" stroke="#e6bf3c" stroke-width="1.3" stroke-linejoin="round" stroke-linecap="round" />
<circle cx="1088.6" cy="99.6" r="1.1" fill="none" stroke="#e6bf3c" stroke-width="1.3" />
<circle cx="1088.6" cy="99.6" r="1.5" fill="#e6bf3c"  />
<circle cx="1112.2" cy="99.9" r="4.6" fill="#33373f"/>
<circle cx="1112.2" cy="99.7" r="1.1" fill="none" stroke="#e6bf3c" stroke-width="1.1" />
<path d="M1115.2,99.7L1117.1,99.7M1114.32,101.82L1115.66,103.16M1112.2,102.7L1112.2,104.6M1110.08,101.82L1108.74,103.16M1109.2,99.7L1107.3,99.7M1110.08,97.58L1108.74,96.24M1112.2,96.7L1112.2,94.8M1114.32,97.58L1115.66,96.24" fill="none" stroke="#e6bf3c" stroke-width="1.1" stroke-linejoin="round" stroke-linecap="round" />
<circle cx="1112.2" cy="99.7" r="1.7" fill="#e6bf3c"  />
<rect x="1132.4" y="97.4" width="7.6" height="5.6" rx="1.3" fill="#33373f" stroke="#e6bf3c" stroke-width="1.3" />
<path d="M1130.2,97V95.8a2.2,2.2 0 0 1 4.4,0V97.2" fill="none" stroke="#e6bf3c" stroke-width="1.2" stroke-linejoin="round" stroke-linecap="round" />
<rect x="1135.6" y="99.2" width="1.2" height="2" rx="0" fill="#e6bf3c"  />
<path d="M1253.9,212.2V204.6a1.3,1.3 0 0 1 2.6,0V209.6M1256.5,209V203.4a1.35,1.35 0 0 1 2.7,0V209.2M1259.2,209V204.2a1.3,1.3 0 0 1 2.6,0V209.6M1261.8,209.6V206.4a1.3,1.3 0 0 1 2.6,0V212.6C1264.4,216.2 1262.2,218.5 1259,218.5H1257.2C1254.6,218.5 1253,217.2 1251.2,214.6L1248.3,210.6C1247.5,209.4 1249,208 1250.3,209.1L1253.9,212.4" fill="none" stroke="#dedede" stroke-width="1.25" stroke-linejoin="round" stroke-linecap="round" />
<circle cx="1256.2" cy="233.5" r="7.8" fill="none" stroke="#dedede" stroke-width="1.3" />
<line x1="1252.6" y1="233.5" x2="1259.8" y2="233.5" stroke="#dedede" stroke-width="1.3" stroke-linecap="butt" />
<line x1="1256.2" y1="229.9" x2="1256.2" y2="237.1" stroke="#dedede" stroke-width="1.3" stroke-linecap="butt" />
<line x1="1261.8" y1="239.1" x2="1264.6" y2="241.7" stroke="#dedede" stroke-width="1.4" stroke-linecap="round" />
<circle cx="1256.2" cy="257.2" r="7.8" fill="none" stroke="#dedede" stroke-width="1.3" />
<line x1="1252.6" y1="257.2" x2="1259.8" y2="257.2" stroke="#dedede" stroke-width="1.3" stroke-linecap="butt" />
<line x1="1261.8" y1="262.8" x2="1264.6" y2="265.4" stroke="#dedede" stroke-width="1.4" stroke-linecap="round" />
<path d="M1252.6,288.4H1249.8a1.6,1.6 0 0 1 -1.6,-1.6V275a1.6,1.6 0 0 1 1.6,-1.6H1262.2a1.6,1.6 0 0 1 1.6,1.6V278.4" fill="none" stroke="#dedede" stroke-width="1.3" stroke-linejoin="round" stroke-linecap="round" />
<circle cx="1259.2" cy="283.4" r="4.3" fill="none" stroke="#dedede" stroke-width="1.3" />
<path d="M1257,283.4H1261.4M1259.2,281.2V285.6" fill="none" stroke="#dedede" stroke-width="1.1" stroke-linejoin="round" stroke-linecap="butt" />
<line x1="1262.4" y1="286.6" x2="1264.6" y2="288.8" stroke="#dedede" stroke-width="1.4" stroke-linecap="round" />
<rect x="1248.2" y="296.6" width="16.3" height="16.3" rx="2" fill="none" stroke="#dedede" stroke-width="1.4" />
<path d="M1257.6,303.4L1261.2,299.8M1258.2,299.7H1261.3V302.8M1255,306L1251.4,309.6M1254.4,309.7H1251.3V306.6" fill="none" stroke="#dedede" stroke-width="1.2" stroke-linejoin="round" stroke-linecap="round" />
<rect x="1252.7" y="326.5" width="7.3" height="7.3" rx="1.3" fill="none" stroke="#dedede" stroke-width="1.3" />
<path d="M1256.6,320.9C1261.6,320.4 1265.4,324.4 1265.6,328.4M1263.2,326.2L1265.6,329L1268,326.2" fill="none" stroke="#dedede" stroke-width="1.3" stroke-linejoin="round" stroke-linecap="round" />
<path d="M1256,339.6C1251,340 1247.2,336 1247,332M1249.4,334.2L1247,331.4L1244.8,334.2" fill="none" stroke="#dedede" stroke-width="1.3" stroke-linejoin="round" stroke-linecap="round" />
<path d="M1252.3,344.9H1261.8L1257.05,349.8Z" fill="#dedede"/>
<path d="M1251.2,378.8V363M1248.8,365.6L1251.2,362.6L1253.6,365.6M1247.6,375.3H1264M1261.4,372.9L1264.4,375.3L1261.4,377.7" fill="none" stroke="#dedede" stroke-width="1.3" stroke-linejoin="round" stroke-linecap="round" />
<path d="M1252.3,385.2H1261.8L1257.05,389.7Z" fill="#dedede"/>
<path d="M881,745V726.3a4,4 0 0 1 4,-4H900.7a4,4 0 0 1 4,4V745Z" fill="#1f6fe2"/>
<path d="M946.8,745V726.3a4,4 0 0 1 4,-4H965.5999999999999a4,4 0 0 1 4,4V745Z" fill="#1f6fe2"/>
<path d="M1022.1,745V726.3a4,4 0 0 1 4,-4H1041.3a4,4 0 0 1 4,4V745Z" fill="#1f6fe2"/>
<path d="M885.1,726.2V741.4H902.4" fill="none" stroke="#e6e6e6" stroke-width="1.4" stroke-linejoin="miter" stroke-linecap="butt" />
<rect x="885.8" y="737.6" width="2.9" height="3" rx="0" fill="none" stroke="#3aa0ff" stroke-width="0.9" />
<path d="M925.6,725.8L912.6,740.7H930.6" fill="none" stroke="#e6e6e6" stroke-width="1.3" stroke-linejoin="miter" stroke-linecap="round" />
<path d="M916.6,736.2A6,6 0 0 1 920.4,740.7" fill="none" stroke="#e6e6e6" stroke-width="1.2" stroke-linejoin="round" stroke-linecap="round" />
<path d="M932.7,732.7H940.9L936.8,737.1Z" fill="#e6e6e6"/>
<rect x="950.05" y="726.25" width="2.5" height="2.5" rx="0.3" fill="#f4f4f4"  />
<rect x="950.05" y="733.45" width="2.5" height="2.5" rx="0.3" fill="#f4f4f4"  />
<rect x="950.05" y="740.65" width="2.5" height="2.5" rx="0.3" fill="#f4f4f4"  />
<rect x="957.25" y="726.25" width="2.5" height="2.5" rx="0.3" fill="#f4f4f4"  />
<rect x="957.25" y="733.45" width="2.5" height="2.5" rx="0.3" fill="#f4f4f4"  />
<rect x="957.25" y="740.65" width="2.5" height="2.5" rx="0.3" fill="#f4f4f4"  />
<rect x="964.55" y="726.25" width="2.5" height="2.5" rx="0.3" fill="#f4f4f4"  />
<rect x="964.55" y="733.45" width="2.5" height="2.5" rx="0.3" fill="#f4f4f4"  />
<rect x="964.55" y="740.65" width="2.5" height="2.5" rx="0.3" fill="#f4f4f4"  />
<path d="M970.9,732.7H978.8L974.85,737.1Z" fill="#e6e6e6"/>
<rect x="988" y="727.7" width="15.3" height="14.5" rx="1.3" fill="none" stroke="#e6e6e6" stroke-width="1.4" />
<rect x="1001.2" y="724.6" width="6" height="5.6" rx="1.2" fill="#2a2c32" stroke="#25a6f5" stroke-width="1.5" />
<path d="M1008.4,732.7H1016.3L1012.35,737.1Z" fill="#e6e6e6"/>
<rect x="1024.4" y="727.2" width="19.8" height="1.3" rx="0.6" fill="#ececec"  />
<rect x="1024.4" y="731.5" width="19.8" height="2.3" rx="1" fill="#ececec"  />
<rect x="1024.4" y="737.7" width="19.8" height="3.8" rx="1.4" fill="#ececec"  />
<line x1="628" y1="516" x2="941" y2="516" stroke="#b8a800" stroke-opacity=".8" stroke-width="1.1" stroke-dasharray="11.6 4.4" stroke-dashoffset="0.8"/>
<path d="M941,511.5V520.7M941,516H946" stroke="#d8d800" stroke-width="1" fill="none"/>
<line x1="1071.5" y1="348" x2="1071.5" y2="574" stroke="#c4c4c4" stroke-width="1"/>
<line x1="958" y1="461" x2="1185" y2="461" stroke="#b2b2b2" stroke-width="1"/>
<line x1="425.1" y1="95.4" x2="742.5" y2="491.2" stroke="#e8414b" stroke-width="2"/>
<path d="M751.6,502.3L736.3,495.5L747.9,486.2Z" fill="#e8414b"/>
<rect x="369.9" y="58.4" width="58.3" height="28.2" rx="0" fill="none" stroke="#e0313a" stroke-width="1.8" />
<rect x="1091.1" y="481" width="75.6" height="20.2" rx="4" fill="#c3c3c3"  />
<text x="1099.4" y="495.7" style="font-size:11.85px;fill:#1c1c30">指定目标点</text>
<rect x="941.9" y="489.7" width="97.7" height="22.5" rx="3.5" fill="#3b4250" stroke="#a4a8ae" stroke-width="1.3" />
<rect x="785.4" y="517.1" width="97.2" height="21.8" rx="3.5" fill="#3b4250" stroke="#2079ea" stroke-width="1.5" />
<rect x="787.8" y="520.7" width="21" height="15.5" rx="0" fill="#1678d7"  />
<rect x="865.3" y="520.5" width="15" height="15.2" rx="2" fill="#66696f" stroke="#9a9ca0" stroke-width="1" />
<path d="M872.8,523.3V531M869.8,528.2L872.8,531.2L875.8,528.2M869.3,533.3H876.3" fill="none" stroke="#f0f0f0" stroke-width="1.1" stroke-linejoin="round" stroke-linecap="round" />
</svg>
<div id="txt">
<span style="left:145.8px;top:231.1px;font-size:12px;line-height:16px;color:#8e9298;font-weight:normal;">ByLayer</span>
<span style="left:167.4px;top:254.9px;font-size:12px;line-height:16px;color:#8e9298;font-weight:normal;">ByLayer</span>
<span style="left:170.8px;top:278.8px;font-size:12px;line-height:16px;color:#8e9298;font-weight:normal;">ByLayer</span>
<span style="left:126.6px;top:302.4px;font-size:12px;line-height:16px;color:#8e9298;font-weight:normal;">1</span>
<span style="left:125.4px;top:326.8px;font-size:12px;line-height:16px;color:#8e9298;font-weight:normal;">ByLayer</span>
<span style="left:1066.3px;top:726.4px;font-size:12.7px;line-height:16px;color:#e0e0e0;font-weight:normal;letter-spacing:-.9px;">1:1</span>
<span style="left:1102.3px;top:726.4px;font-size:12.7px;line-height:16px;color:#e0e0e0;font-weight:normal;">2069.54, 2294.94</span>
<span style="left:1160.5px;top:7.9px;font-size:12px;line-height:16px;color:#d2d2d2;font-weight:bold;transform:translateX(-50%);">?</span>
<span style="left:944.1px;top:492.8px;font-size:12.3px;line-height:16px;color:#e6e6e6;font-weight:normal;">0</span>
<span style="left:788.6px;top:520.4px;font-size:12px;line-height:16px;color:#ffffff;font-weight:normal;">141</span>
</div>
</body></html>
